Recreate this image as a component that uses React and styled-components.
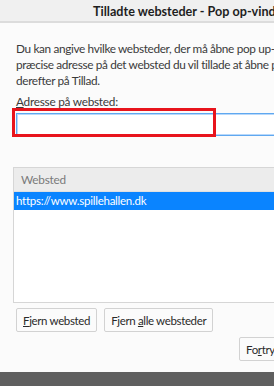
import React from 'react';
import styled, { createGlobalStyle } from 'styled-components';

const GlobalStyle = createGlobalStyle`
    html, body {
        margin: 0;
        padding: 0;
        background: #5f5f5f;
        overflow: hidden;
    }
    body {
        font-family: Lato, "Noto Sans", sans-serif;
    }
`;

const Window = styled.div`
    width: 470px;
    height: 372px;
    background: #fbfbfb;
    display: flex;
    flex-direction: column;
`;

const TitleBar = styled.div`
    height: 21px;
    background: #f0f0f0;
    border-bottom: 2px solid #dcdcdc;
    padding-left: 93px;
    font-size: 12.6px;
    font-weight: 700;
    color: #1e1e1e;
    line-height: 23px;
    white-space: nowrap;
`;

const Body = styled.div`
    padding: 18px 0 0 16px;
    display: flex;
    flex-direction: column;
    font-size: 11.8px;
    letter-spacing: -0.25px;
    color: #3a3a3a;
`;

const Intro = styled.p`
    margin: 0;
    line-height: 16px;
    letter-spacing: -0.35px;
    white-space: nowrap;
`;

const Label = styled.div`
    margin-top: 5px;
    line-height: 16px;
`;

const Key = styled.span`
    text-decoration: underline;
`;

const FieldWrap = styled.div`
    position: relative;
    margin-top: 3px;
`;

const Field = styled.input`
    box-sizing: border-box;
    display: block;
    width: 430px;
    height: 23px;
    border: 1px solid #5fa8f0;
    box-shadow: inset 0 0 0 1px #b8d8fa;
    background: #fff;
    outline: none;
    margin: 0;
`;

const Highlight = styled.div`
    position: absolute;
    left: -4px;
    top: -5px;
    width: 198px;
    height: 23px;
    border: 3px solid #e8141c;
    pointer-events: none;
`;

const List = styled.div`
    margin: 31px 0 0 -3px;
    width: 440px;
    height: 134px;
    border: 1px solid #d6d6d6;
    background: #fff;
    display: flex;
    flex-direction: column;
`;

const ListHead = styled.div`
    height: 23px;
    background: #ececec;
    border-bottom: 1px solid #e0e0e0;
    padding-left: 7px;
    line-height: 23px;
    color: #7a7a7a;
`;

const Row = styled.div`
    height: 18px;
    padding-left: 2px;
    background: ${p => (p.$selected ? '#0a84ff' : 'transparent')};
    color: ${p => (p.$selected ? '#fff' : '#222')};
    font-size: 11.5px;
    line-height: 18px;
`;

const ButtonRow = styled.div`
    display: flex;
    gap: 7px;
    margin-top: 5px;
`;

const Button = styled.button`
    height: 24px;
    padding: 0 6px;
    border: 1px solid #d2d2d2;
    border-radius: 2px;
    background: #fbfbfb;
    font-family: inherit;
    font-size: 11.5px;
    letter-spacing: -0.35px;
    color: #2a2a2a;
    margin: 0;
    white-space: nowrap;
`;

const Footer = styled.div`
    display: flex;
    margin-top: 5px;
    padding-left: 223px;
`;

export default function App() {
    return (
        <>
            <GlobalStyle />
            <Window>
                <TitleBar>Tilladte websteder - Pop op-vinduer</TitleBar>
                <Body>
                    <Intro>
                        Du kan angive hvilke websteder, der må åbne pop up-vinduer. Skriv den<br />
                        præcise adresse på det websted du vil tillade at åbne pop up-vinduer, og klik<br />
                        derefter på Tillad.
                    </Intro>
                    <Label><Key>A</Key>dresse på websted:</Label>
                    <FieldWrap>
                        <Field type="text" />
                        <Highlight />
                    </FieldWrap>
                    <List>
                        <ListHead>Websted</ListHead>
                        <Row $selected>https://www.spillehallen.dk</Row>
                    </List>
                    <ButtonRow>
                        <Button><Key>F</Key>jern websted</Button>
                        <Button>Fjern <Key>a</Key>lle websteder</Button>
                    </ButtonRow>
                    <Footer>
                        <Button>Fo<Key>r</Key>tryd ændringer</Button>
                    </Footer>
                </Body>
            </Window>
        </>
    );
}
